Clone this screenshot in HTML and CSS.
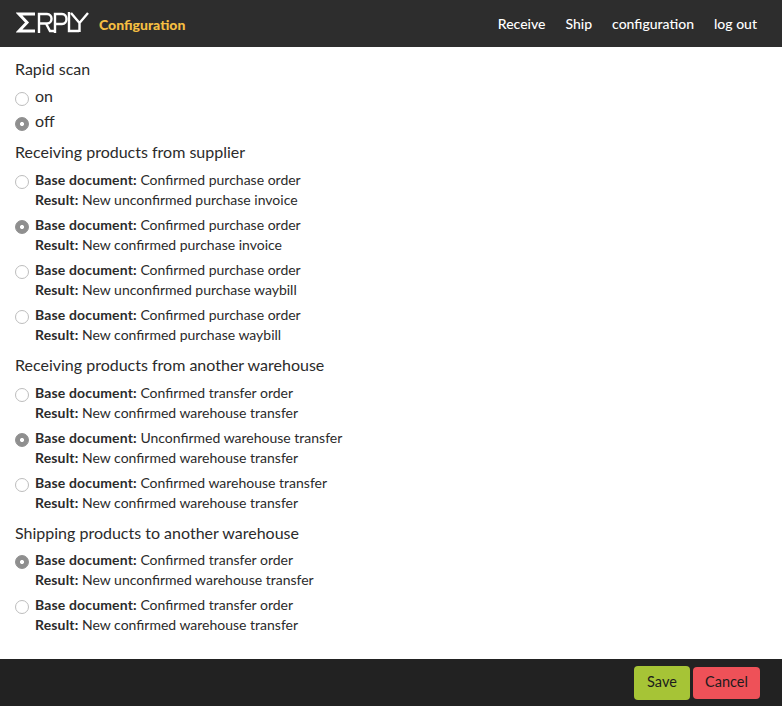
FILE: index.html
```html
<!DOCTYPE html>
<html lang="en">
<head>
<meta charset="utf-8">
<title>Configuration</title>
<link rel="stylesheet" href="styles.css">
</head>
<body>
<header class="topbar">
  <div class="brand">
    <svg class="logo" width="74" height="24" viewBox="0 0 74 24" aria-label="ERPLY">
      <path class="logo-stroke sigma" d="M19 3H3L11 11.500 3 20H19"/>
      <path class="logo-stroke" d="M23 22V3H31C37 3 37 12.500 31 12.500H23M30 12.500L34 20H39"/>
      <path class="logo-stroke" d="M39 22V3H46C52 3 52 13 46 13H39"/>
      <path class="logo-stroke" d="M53 1V20H63"/>
      <path class="logo-stroke" d="M55 2L63.500 12 72 2M63.500 12V21"/>
    </svg>
    <span class="page-title">Configuration</span>
  </div>
  <nav class="nav">
    <a>Receive</a>
    <a>Ship</a>
    <a>configuration</a>
    <a>log out</a>
  </nav>
</header>
<main class="content">
  <section class="group rapid">
    <h2>Rapid scan</h2>
    <label class="opt short"><input type="radio" name="a"><span>on</span></label>
    <label class="opt short"><input type="radio" name="a" checked><span>off</span></label>
  </section>
  <section class="group">
    <h2>Receiving products from supplier</h2>
    <label class="opt"><input type="radio" name="b"><span><b>Base document:</b> Confirmed purchase order<br><b>Result:</b> New unconfirmed purchase invoice</span></label>
    <label class="opt"><input type="radio" name="b" checked><span><b>Base document:</b> Confirmed purchase order<br><b>Result:</b> New confirmed purchase invoice</span></label>
    <label class="opt"><input type="radio" name="b"><span><b>Base document:</b> Confirmed purchase order<br><b>Result:</b> New unconfirmed purchase waybill</span></label>
    <label class="opt"><input type="radio" name="b"><span><b>Base document:</b> Confirmed purchase order<br><b>Result:</b> New confirmed purchase waybill</span></label>
  </section>
  <section class="group">
    <h2>Receiving products from another warehouse</h2>
    <label class="opt"><input type="radio" name="c"><span><b>Base document:</b> Confirmed transfer order<br><b>Result:</b> New confirmed warehouse transfer</span></label>
    <label class="opt"><input type="radio" name="c" checked><span><b>Base document:</b> Unconfirmed warehouse transfer<br><b>Result:</b> New confirmed warehouse transfer</span></label>
    <label class="opt"><input type="radio" name="c"><span><b>Base document:</b> Confirmed warehouse transfer<br><b>Result:</b> New confirmed warehouse transfer</span></label>
  </section>
  <section class="group">
    <h2>Shipping products to another warehouse</h2>
    <label class="opt"><input type="radio" name="d" checked><span><b>Base document:</b> Confirmed transfer order<br><b>Result:</b> New unconfirmed warehouse transfer</span></label>
    <label class="opt"><input type="radio" name="d"><span><b>Base document:</b> Confirmed transfer order<br><b>Result:</b> New confirmed warehouse transfer</span></label>
  </section>
</main>
<footer class="bottombar">
  <button class="btn save">Save</button>
  <button class="btn cancel">Cancel</button>
</footer>
</body>
</html>
```
FILE: styles.css
```css
* { box-sizing: border-box; }
html, body { margin: 0; height: 100%; }
body {
  display: flex;
  flex-direction: column;
  height: 706px;
  overflow: hidden;
  background: #fff;
  color: #2b2b2b;
  font-family: Lato, "Open Sans", sans-serif;
  font-size: 14px;
}
.topbar {
  height: 47px;
  flex: none;
  background: #2d2d2d;
  display: flex;
  align-items: center;
  justify-content: space-between;
  padding: 0 25px 0 16px;
}
.brand { display: flex; align-items: center; gap: 9px; }
.logo { display: block; margin-top: -2px; }
.logo-stroke { fill: none; stroke: #fff; stroke-width: 2.4; }
.sigma { stroke-width: 3; }
.page-title { color: #f5bf42; font-weight: 900; font-size: 14px; margin-top: 2px; }
.nav { display: flex; gap: 20px; color: #fff; font-size: 14px; font-weight: 500; }
.content { flex: 1; padding: 12px 15px 0; }
.group { margin-bottom: 10px; }
.rapid { margin-bottom: 11.3px; }
h2 { margin: 0 0 7.7px; font-size: 16px; font-weight: 400; line-height: 20px; }
.rapid h2 { margin-bottom: 7px; }
.opt { display: flex; align-items: flex-start; gap: 6px; font-size: 14px; line-height: 20px; margin-bottom: 5px; }
.opt.short { font-size: 16px; }
.opt b { font-weight: 700; letter-spacing: .15px; }
.opt input {
  appearance: none;
  width: 14px;
  height: 14px;
  margin: 5px 0 0;
  border: 1px solid #bdbdbd;
  border-radius: 50%;
  background: #fff;
  flex: none;
}
.opt.short input { margin-top: 6px; }
.opt input:checked {
  background: radial-gradient(circle, #fff 0 1.6px, #8f8f8f 2.4px);
  border-color: #8f8f8f;
}
.bottombar {
  height: 47px;
  flex: none;
  background: #222;
  display: flex;
  align-items: center;
  justify-content: flex-end;
  gap: 3px;
  padding: 0 22px;
}
.btn {
  border: 0;
  border-radius: 4px;
  color: #1c1c1c;
  font-family: inherit;
  font-size: 14.5px;
  padding: 0 0 2px;
}
.save { width: 56px; height: 34px; background: #a6c436; }
.cancel { width: 67px; height: 32px; background: #ee5158; }
```
